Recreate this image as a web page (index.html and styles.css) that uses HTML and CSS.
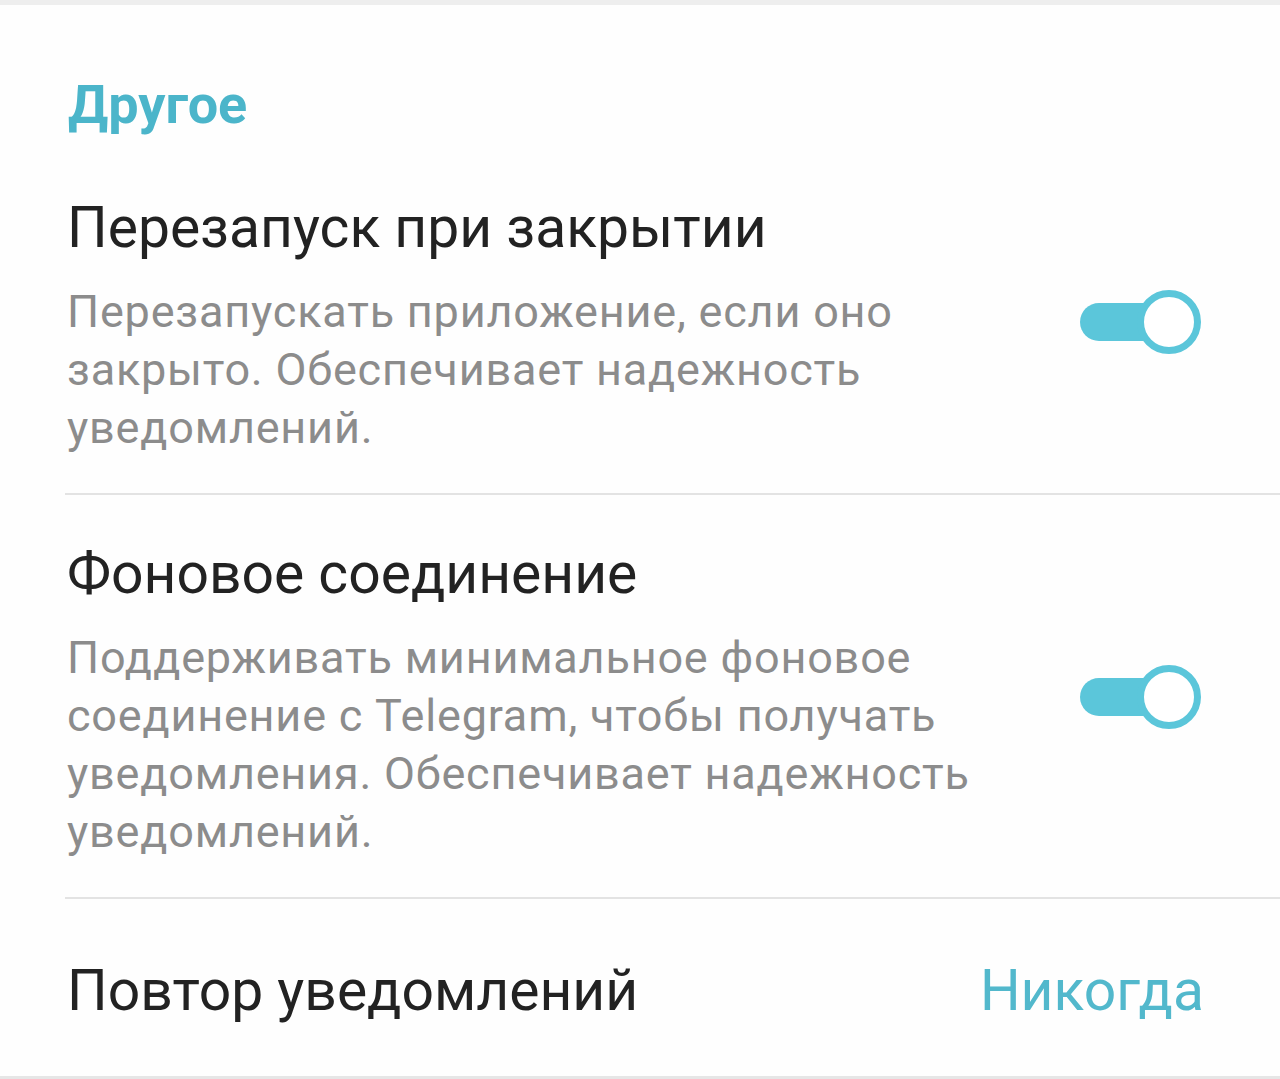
FILE: index.html
```html
<!DOCTYPE html>
<html lang="ru">
<head>
    <meta charset="UTF-8">
    <meta name="viewport" content="width=device-width, initial-scale=1.0">
    <title>Другое</title>
    <link rel="stylesheet" href="styles.css">
</head>
<body>
    <div class="top-strip"></div>

    <section class="settings">
        <h2 class="settings-header">Другое</h2>

        <div class="setting-row">
            <div class="setting-text">
                <div class="setting-title">Перезапуск при закрытии</div>
                <div class="setting-desc">Перезапускать приложение, если оно закрыто. Обеспечивает надежность уведомлений.</div>
            </div>
            <div class="switch on"></div>
        </div>

        <div class="setting-row">
            <div class="setting-text">
                <div class="setting-title">Фоновое соединение</div>
                <div class="setting-desc">Поддерживать минимальное фоновое соединение с Telegram, чтобы получать уведомления. Обеспечивает надежность уведомлений.</div>
            </div>
            <div class="switch on"></div>
        </div>

        <div class="setting-row single">
            <div class="setting-title">Повтор уведомлений</div>
            <div class="setting-value">Никогда</div>
        </div>
    </section>

    <div class="bottom-strip"></div>
</body>
</html>
```

FILE: styles.css
```css
body {
    margin: 0;
    padding: 0;
    font-family: 'Roboto', 'Noto Sans', sans-serif;
    background: #fefefe;
    color: #222;
}

.top-strip {
    height: 5px;
    background: #eeeeee;
}

.bottom-strip {
    height: 4px;
    background: #e6e6e6;
}

.settings {
    padding-left: 65px;
}

.settings-header {
    margin: 0;
    padding: 68px 0 11px 3px;
    font-size: 54px;
    line-height: 1.2;
    font-weight: 700;
    color: #4bb5ca;
}

.setting-row {
    display: flex;
    align-items: center;
    justify-content: space-between;
    padding: 45px 79px 36px 2px;
    border-bottom: 2px solid #e3e3e3;
}

.setting-row.single {
    border-bottom: none;
    padding-top: 58px;
    padding-bottom: 52px;
    padding-right: 76px;
}

.setting-text {
    width: 960px;
}

.setting-title {
    font-size: 57px;
    line-height: 67px;
    color: #222;
}

.setting-desc {
    margin-top: 22px;
    font-size: 45px;
    line-height: 58px;
    letter-spacing: 0.8px;
    color: #8c8c8c;
}

.setting-value {
    font-size: 57px;
    line-height: 67px;
    color: #52b8cc;
}

.switch {
    position: relative;
    width: 121px;
    height: 64px;
    flex-shrink: 0;
    margin-top: -6px;
}

.switch::before {
    content: "";
    position: absolute;
    left: 0;
    top: 13px;
    width: 110px;
    height: 38px;
    border-radius: 19px;
    background: #5bc6da;
}

.switch::after {
    content: "";
    position: absolute;
    right: 0;
    top: 0;
    width: 50px;
    height: 50px;
    border: 7px solid #5bc6da;
    border-radius: 50%;
    background: #fff;
}
```
